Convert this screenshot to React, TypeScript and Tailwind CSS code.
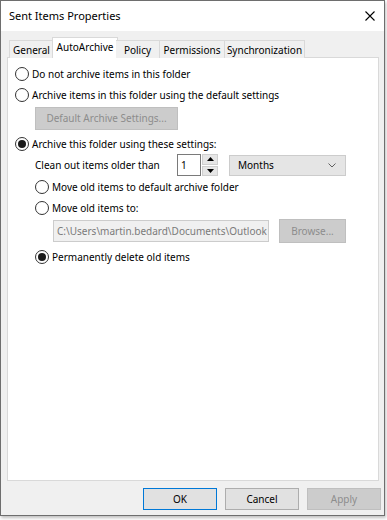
import React from "react";

const font = { fontFamily: '"Noto Sans", "Open Sans", sans-serif' };

function Radio({ checked, label, className = "" }: { checked?: boolean; label: string; className?: string }) {
  return (
    <div className={"flex items-center h-[21px] " + className}>
      <span className="w-[14px] h-[14px] rounded-full border border-[#333] bg-white flex items-center justify-center shrink-0">
        {checked && <span className="w-[8px] h-[8px] rounded-full bg-[#1a1a1a]" />}
      </span>
      <span className="ml-[3px] text-[10px] text-black leading-none whitespace-nowrap">{label}</span>
    </div>
  );
}

function Tab({ label, first, w }: { label: string; first?: boolean; w: string }) {
  return (
    <div
      className={
        "h-[18px] mt-[3px] bg-[#f0f0f0] border-t border-r border-[#d9d9d9] flex items-center justify-center text-[10px] pt-[1px] whitespace-nowrap " +
        (first ? "border-l " : "") +
        w
      }
    >
      {label}
    </div>
  );
}

export default function App() {
  return (
    <div className="w-[387px] h-[520px] bg-white relative" style={font}>
      <div className="w-[385px] h-[516px] border border-[#6e6e6e] bg-[#f0f0f0] flex flex-col shadow-[1px_2px_3px_rgba(0,0,0,0.25)]">
        {/* Title bar */}
        <div className="h-[30px] bg-white flex items-center justify-between shrink-0">
          <span className="ml-[8px] text-[11px] text-black whitespace-nowrap">Sent Items Properties</span>
          <svg width="10" height="10" viewBox="0 0 10 10" className="mr-[9px]">
            <path d="M0.5 0.5 L9.5 9.5 M9.5 0.5 L0.5 9.5" stroke="#000" strokeWidth="1.1" />
          </svg>
        </div>
        {/* Body */}
        <div className="flex-1 flex flex-col pl-[6px] pr-[5px] pt-[6px]">
          <div className="flex items-start pl-[2px] h-[21px] -mb-px relative z-10">
            <Tab label="General" first w="w-[45px]" />
            <div className="w-[62px] h-[21px] flex justify-center">
              <div className="w-[66px] shrink-0 h-[21px] bg-white border border-[#d9d9d9] border-b-0 flex items-center justify-center text-[10px] pb-[1px] whitespace-nowrap">
                AutoArchive
              </div>
            </div>
            <Tab label="Policy" w="w-[44px]" />
            <Tab label="Permissions" w="w-[65px]" />
            <Tab label="Synchronization" w="w-[80px]" />
          </div>
          <div className="h-[424px] bg-white border border-[#d9d9d9] flex flex-col pl-[7px] pt-[5px] text-[10px] text-black">
            <Radio label="Do not archive items in this folder" />
            <Radio label="Archive items in this folder using the default settings" />
            <div className="ml-[20px] mt-[2px] w-[143px] h-[23px] bg-[#cccccc] border border-[#bfbfbf] flex items-center justify-center text-[#8d8d8d] text-[10px] whitespace-nowrap">
              Default Archive Settings...
            </div>
            <Radio checked label="Archive this folder using these settings:" className="mt-[3px]" />
            <div className="flex items-center h-[22px] ml-[20px]">
              <span className="w-[142px] whitespace-nowrap">Clean out items older than</span>
              <div className="w-[24px] h-[22px] border border-[#7a7a7a] flex items-center pl-[3px]">1</div>
              <div className="w-[16px] h-[22px] ml-px flex flex-col gap-px">
                <div className="flex-1 bg-[#e6e6e6] border border-[#cfcfcf] flex items-center justify-center">
                  <svg width="7" height="4" viewBox="0 0 7 4"><path d="M0 4 L3.5 0 L7 4 Z" fill="#000" /></svg>
                </div>
                <div className="flex-1 bg-[#e6e6e6] border border-[#cfcfcf] flex items-center justify-center">
                  <svg width="7" height="4" viewBox="0 0 7 4"><path d="M0 0 L3.5 4 L7 0 Z" fill="#000" /></svg>
                </div>
              </div>
              <div className="ml-[11px] w-[117px] h-[21px] bg-[#e5e5e5] border border-[#cccccc] flex items-center justify-between pl-[8px] pr-[9px]">
                <span>Months</span>
                <svg width="8" height="5" viewBox="0 0 8 5"><path d="M0.5 0.5 L4 4 L7.5 0.5" stroke="#606060" fill="none" strokeWidth="1" /></svg>
              </div>
            </div>
            <Radio label="Move old items to default archive folder" className="ml-[20px]" />
            <Radio label="Move old items to:" className="ml-[20px]" />
            <div className="flex items-center ml-[38px] mt-[1px]">
              <div className="w-[216px] h-[22px] bg-[#f0f0f0] border border-[#cccccc] flex items-center pl-[3px] text-[#7a7a7a] overflow-hidden whitespace-nowrap">
                C:\Users\martin.bedard\Documents\Outlook F
              </div>
              <div className="ml-[10px] w-[67px] h-[24px] bg-[#cccccc] border border-[#bfbfbf] flex items-center justify-center text-[#8d8d8d]">
                Browse...
              </div>
            </div>
            <Radio checked label="Permanently delete old items" className="ml-[20px] mt-[3px]" />
          </div>
          <div className="flex justify-end gap-[8px] mt-[7px] -mr-[2px] text-[10px]">
            <div className="w-[74px] h-[22px] bg-[#e1e1e1] border border-[#0078d7] flex items-center justify-center">OK</div>
            <div className="w-[74px] h-[22px] bg-[#e1e1e1] border border-[#adadad] flex items-center justify-center">Cancel</div>
            <div className="w-[74px] h-[22px] bg-[#cccccc] border border-[#bfbfbf] flex items-center justify-center text-[#8d8d8d]">Apply</div>
          </div>
        </div>
      </div>
    </div>
  );
}
